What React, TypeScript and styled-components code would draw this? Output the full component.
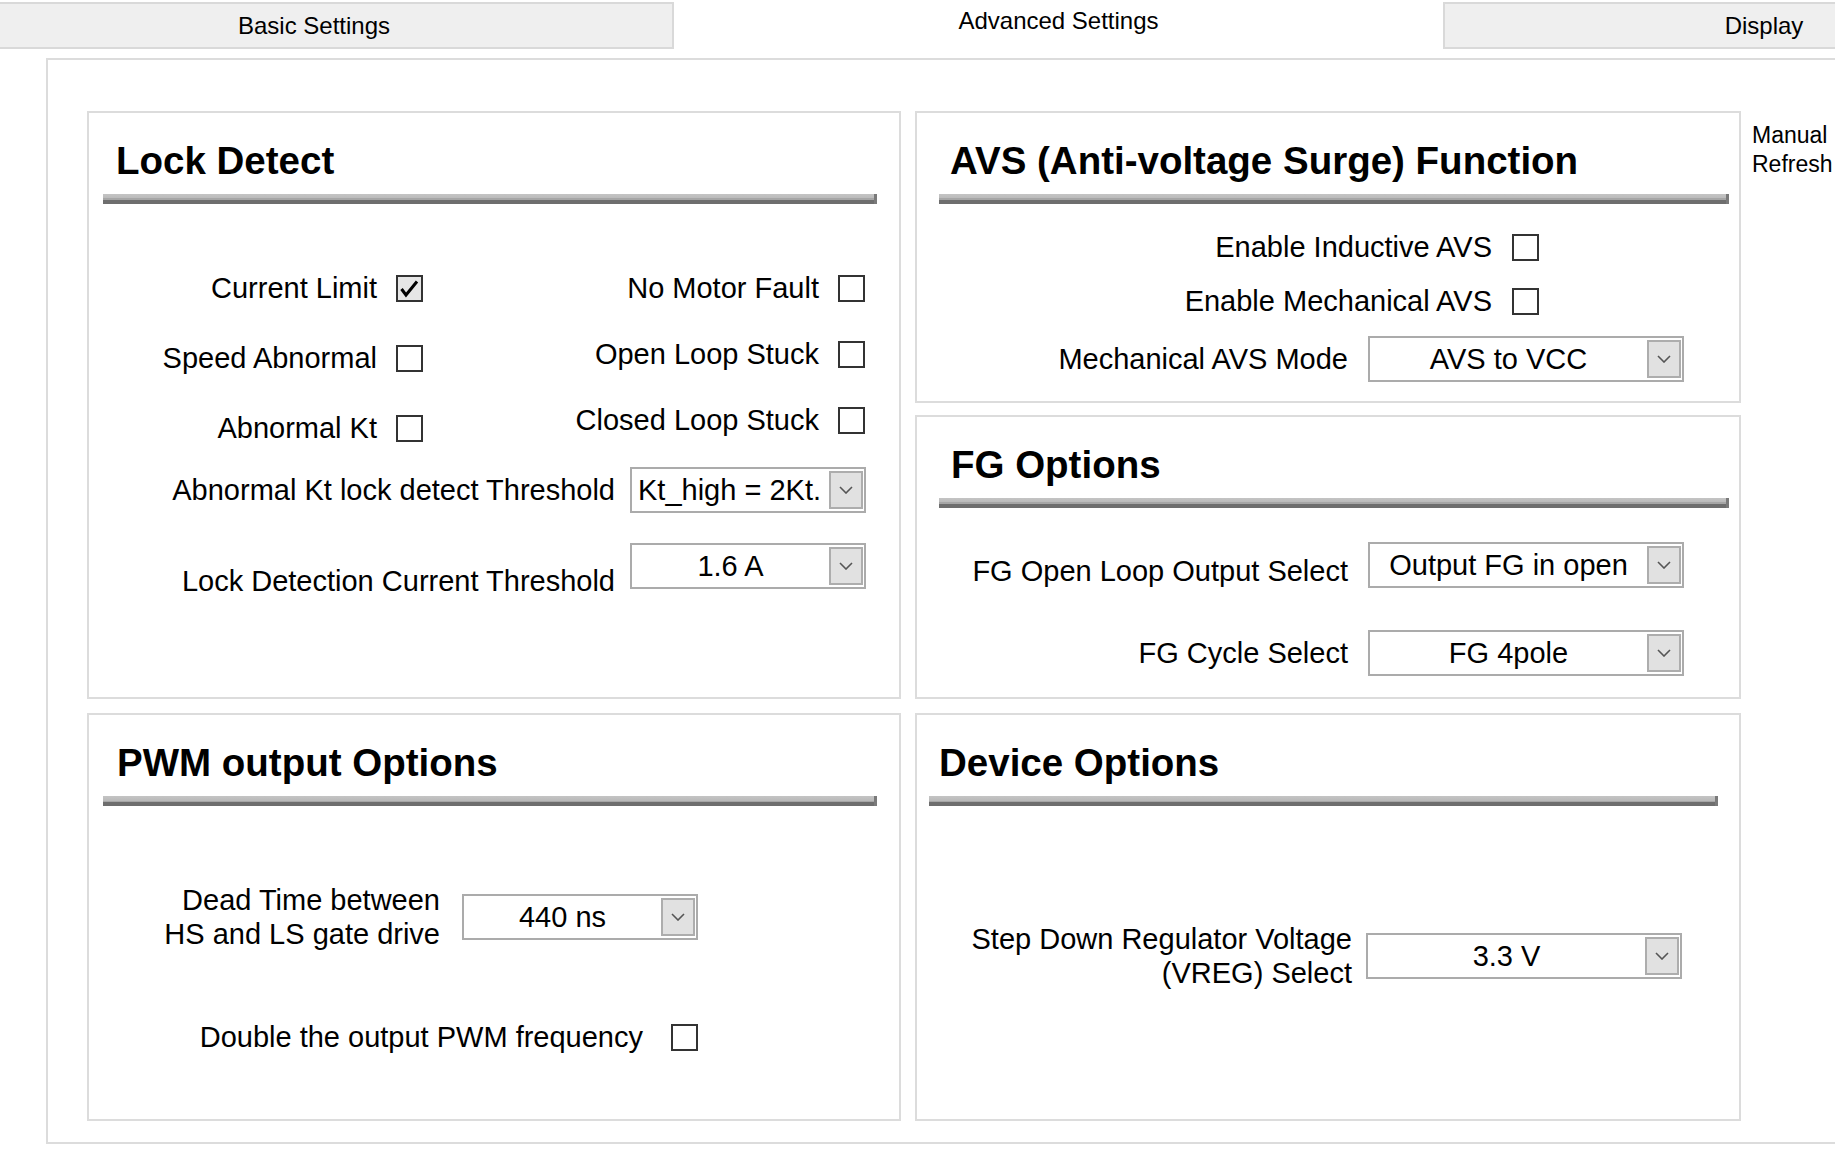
import React from 'react';
import styled, { createGlobalStyle } from 'styled-components';

const GlobalStyle = createGlobalStyle`
  html, body {
    margin: 0;
    padding: 0;
    background: #ffffff;
  }
  body {
    font-family: "Liberation Sans", Arial, sans-serif;
    color: #000000;
  }
`;

const Page = styled.div`
  width: 1835px;
  height: 1153px;
  overflow: hidden;
  background: #ffffff;
`;

const TabStrip = styled.div`
  display: flex;
  align-items: flex-start;
  height: 49px;
`;

const Tab = styled.div<{ $width: number; $active?: boolean; $edge?: 'left' | 'right'; $shift?: number }>`
  flex: none;
  box-sizing: border-box;
  width: ${p => p.$width}px;
  height: 47px;
  margin-top: 2px;
  display: flex;
  align-items: center;
  justify-content: center;
  font-size: 24px;
  background: ${p => (p.$active ? '#ffffff' : '#efefef')};
  border-top: ${p => (p.$active ? 'none' : '2px solid #d9d9d9')};
  border-bottom: ${p => (p.$active ? 'none' : '2px solid #d9d9d9')};
  border-left: ${p => (p.$edge === 'left' ? '2px solid #d9d9d9' : 'none')};
  border-right: ${p => (p.$edge === 'right' ? '2px solid #d9d9d9' : 'none')};
  padding-right: ${p => p.$shift || 0}px;
  padding-bottom: ${p => (p.$active ? 9 : 0)}px;
`;

const Content = styled.div`
  box-sizing: border-box;
  width: 1900px;
  height: 1086px;
  margin: 9px 0 0 46px;
  border: 2px solid #dcdcdc;
  padding: 51px 0 0 39px;
  display: flex;
  align-items: flex-start;
  gap: 14px;
`;

const Column = styled.div<{ $width: number; $gap: number }>`
  flex: none;
  width: ${p => p.$width}px;
  display: flex;
  flex-direction: column;
  gap: ${p => p.$gap}px;
`;

const Panel = styled.section<{ $height: number }>`
  box-sizing: border-box;
  height: ${p => p.$height}px;
  border: 2px solid #dcdcdc;
  background: #ffffff;
  display: flex;
  flex-direction: column;
`;

const Heading = styled.h2<{ $pad: number }>`
  margin: 29px 0 0 ${p => p.$pad}px;
  font-size: 38.5px;
  line-height: 38px;
  font-weight: bold;
  white-space: nowrap;
`;

const Rule = styled.div<{ $left: number; $right: number }>`
  height: 10px;
  margin: 14px ${p => p.$right}px 0 ${p => p.$left}px;
  background: linear-gradient(
    to bottom,
    #c4c4c4 0,
    #bababa 45%,
    #a6a6a6 45%,
    #a6a6a6 65%,
    #6e6e6e 65%,
    #6e6e6e 100%
  );
  border-right: 3px solid #7a7a7a;
`;

const Stack = styled.div<{ $top: number; $gap: number }>`
  display: flex;
  flex-direction: column;
  gap: ${p => p.$gap}px;
  margin-top: ${p => p.$top}px;
`;

const CheckGrid = styled.div`
  display: grid;
  grid-template-columns: 334px 442px;
  align-items: start;
  margin-top: 62px;
`;

const Row = styled.div<{ $gap: number; $align?: string }>`
  display: flex;
  align-items: ${p => p.$align || 'center'};
  gap: ${p => p.$gap}px;
  min-height: 44px;
`;

const Label = styled.div<{ $width: number; $drop?: number; $sink?: number }>`
  flex: none;
  box-sizing: border-box;
  width: ${p => p.$width}px;
  text-align: right;
  font-size: 29px;
  line-height: 34px;
  white-space: nowrap;
  padding-top: ${p => p.$drop || 0}px;
  margin-bottom: ${p => -(p.$sink || 0)}px;
`;

const Box = styled.div<{ $checked?: boolean }>`
  flex: none;
  box-sizing: border-box;
  width: 27px;
  height: 27px;
  border: 2px solid #333333;
  background: ${p => (p.$checked ? '#e6e6e6' : '#ffffff')};
  display: flex;
  align-items: center;
  justify-content: center;
`;

const Select = styled.div<{ $width: number }>`
  flex: none;
  box-sizing: border-box;
  width: ${p => p.$width}px;
  height: 46px;
  border: 2px solid #ababab;
  padding: 2px 1px 2px 0;
  background: #ffffff;
  display: flex;
`;

const SelectValue = styled.div<{ $left?: boolean }>`
  flex: 1;
  min-width: 0;
  display: flex;
  align-items: center;
  justify-content: ${p => (p.$left ? 'flex-start' : 'center')};
  padding-left: ${p => (p.$left ? 6 : 0)}px;
  font-size: 29px;
  white-space: nowrap;
  overflow: hidden;
`;

const SelectButton = styled.div`
  flex: none;
  box-sizing: border-box;
  width: 34px;
  border: 2px solid #adadad;
  background: #e1e1e1;
  display: flex;
  align-items: center;
  justify-content: center;
`;

const SideNote = styled.div`
  flex: none;
  margin: 10px 0 0 -3px;
  font-size: 23px;
  line-height: 29px;
`;

function Checkbox({ checked }: { checked?: boolean }) {
  return (
    <Box $checked={checked}>
      {checked && (
        <svg width="23" height="23" viewBox="0 0 23 23">
          <polyline points="3.5,12 8,18 19,4.5" fill="none" stroke="#000" strokeWidth="3" />
        </svg>
      )}
    </Box>
  );
}

function Dropdown({ width, value, left }: { width: number; value: string; left?: boolean }) {
  return (
    <Select $width={width}>
      <SelectValue $left={left}>{value}</SelectValue>
      <SelectButton>
        <svg width="14" height="8" viewBox="0 0 14 8">
          <polyline points="1,1 7,7 13,1" fill="none" stroke="#555" strokeWidth="1.6" />
        </svg>
      </SelectButton>
    </Select>
  );
}

function CheckItem({ label, width, gap, checked }: { label: string; width: number; gap: number; checked?: boolean }) {
  return (
    <Row $gap={gap}>
      <Label $width={width}>{label}</Label>
      <Checkbox checked={checked} />
    </Row>
  );
}

export default function App() {
  return (
    <Page>
      <GlobalStyle />
      <TabStrip>
        <Tab $width={674} $edge="right" $shift={44}>Basic Settings</Tab>
        <Tab $width={769} $active>Advanced Settings</Tab>
        <Tab $width={640} $edge="left">Display</Tab>
      </TabStrip>

      <Content>
        <Column $width={814} $gap={14}>
          <Panel $height={588}>
            <Heading $pad={27}>Lock Detect</Heading>
            <Rule $left={14} $right={22} />
            <CheckGrid>
              <Stack $top={0} $gap={26}>
                <CheckItem label="Current Limit" width={288} gap={19} checked />
                <CheckItem label="Speed Abnormal" width={288} gap={19} />
                <CheckItem label="Abnormal Kt" width={288} gap={19} />
              </Stack>
              <Stack $top={0} $gap={22}>
                <CheckItem label="No Motor Fault" width={396} gap={19} />
                <CheckItem label="Open Loop Stuck" width={396} gap={19} />
                <CheckItem label="Closed Loop Stuck" width={396} gap={19} />
              </Stack>
            </CheckGrid>
            <Stack $top={17} $gap={30}>
              <Row $gap={15}>
                <Label $width={526}>Abnormal Kt lock detect Threshold</Label>
                <Dropdown width={236} value="Kt_high = 2Kt." left />
              </Row>
              <Row $gap={15} $align="flex-end">
                <Label $width={526} $sink={9}>Lock Detection Current Threshold</Label>
                <Dropdown width={236} value="1.6 A" />
              </Row>
            </Stack>
          </Panel>

          <Panel $height={408}>
            <Heading $pad={28}>PWM output Options</Heading>
            <Rule $left={14} $right={22} />
            <Stack $top={77} $gap={64}>
              <Row $gap={22}>
                <Label $width={351}>
                  Dead Time between
                  <br />
                  HS and LS gate drive
                </Label>
                <Dropdown width={236} value="440 ns" />
              </Row>
              <CheckItem label="Double the output PWM frequency" width={554} gap={28} />
            </Stack>
          </Panel>
        </Column>

        <Column $width={826} $gap={14}>
          <Column $width={826} $gap={12}>
            <Panel $height={292}>
              <Heading $pad={33}>AVS (Anti-voltage Surge) Function</Heading>
              <Rule $left={22} $right={10} />
              <Stack $top={21} $gap={10}>
                <CheckItem label="Enable Inductive AVS" width={575} gap={20} />
                <CheckItem label="Enable Mechanical AVS" width={575} gap={20} />
              </Stack>
              <Stack $top={13} $gap={0}>
                <Row $gap={20}>
                  <Label $width={431}>Mechanical AVS Mode</Label>
                  <Dropdown width={316} value="AVS to VCC" />
                </Row>
              </Stack>
            </Panel>

            <Panel $height={284}>
              <Heading $pad={34}>FG Options</Heading>
              <Rule $left={22} $right={10} />
              <Stack $top={34} $gap={42}>
                <Row $gap={20}>
                  <Label $width={431} $drop={12}>FG Open Loop Output Select</Label>
                  <Dropdown width={316} value="Output FG in open" />
                </Row>
                <Row $gap={20}>
                  <Label $width={431}>FG Cycle Select</Label>
                  <Dropdown width={316} value="FG 4pole" />
                </Row>
              </Stack>
            </Panel>
          </Column>

          <Panel $height={408}>
            <Heading $pad={22}>Device Options</Heading>
            <Rule $left={12} $right={21} />
            <Stack $top={116} $gap={0}>
              <Row $gap={14}>
                <Label $width={435}>
                  Step Down Regulator Voltage
                  <br />
                  (VREG) Select
                </Label>
                <Dropdown width={316} value="3.3 V" />
              </Row>
            </Stack>
          </Panel>
        </Column>

        <SideNote>
          Manual
          <br />
          Refresh
        </SideNote>
      </Content>
    </Page>
  );
}
